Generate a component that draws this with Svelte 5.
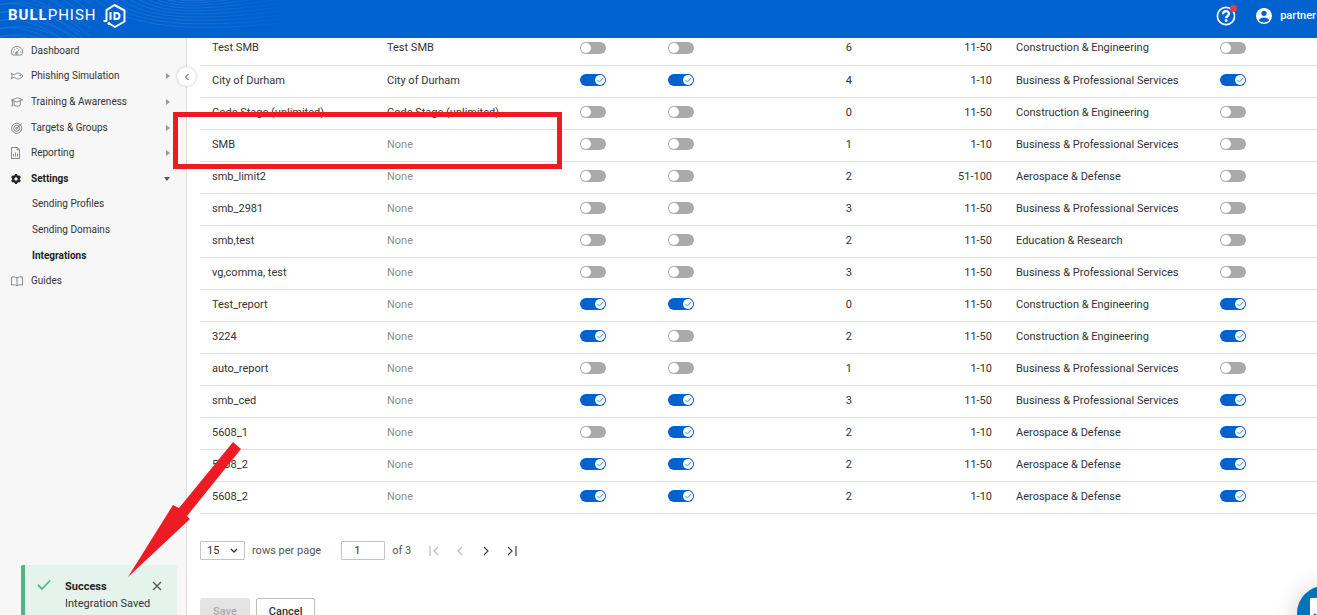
<script lang="ts">
  type Row = [string, string, number, number, number, string, string, number];
  const CE = 'Construction & Engineering';
  const BP = 'Business & Professional Services';
  const AD = 'Aerospace & Defense';
  const ER = 'Education & Research';
  const rows: Row[] = [
    ['Test SMB', 'Test SMB', 0, 0, 6, '11-50', CE, 0],
    ['City of Durham', 'City of Durham', 1, 1, 4, '1-10', BP, 1],
    ['Code Stage (unlimited)', 'Code Stage (unlimited)', 0, 0, 0, '11-50', CE, 0],
    ['SMB', '', 0, 0, 1, '1-10', BP, 0],
    ['smb_limit2', '', 0, 0, 2, '51-100', AD, 0],
    ['smb_2981', '', 0, 0, 3, '11-50', BP, 0],
    ['smb,test', '', 0, 0, 2, '11-50', ER, 0],
    ['vg,comma, test', '', 0, 0, 3, '11-50', BP, 0],
    ['Test_report', '', 1, 1, 0, '11-50', CE, 1],
    ['3224', '', 1, 0, 2, '11-50', CE, 1],
    ['auto_report', '', 0, 0, 1, '1-10', BP, 0],
    ['smb_ced', '', 1, 1, 3, '11-50', BP, 1],
    ['5608_1', '', 0, 1, 2, '1-10', AD, 1],
    ['5608_2', '', 1, 1, 2, '11-50', AD, 1],
    ['5608_2', '', 1, 1, 2, '1-10', AD, 1],
  ];
  const nav = [
    { label: 'Dashboard', icon: 'gauge', arrow: '' },
    { label: 'Phishing Simulation', icon: 'fish', arrow: 'right' },
    { label: 'Training & Awareness', icon: 'cap', arrow: 'right' },
    { label: 'Targets & Groups', icon: 'target', arrow: 'right' },
    { label: 'Reporting', icon: 'report', arrow: 'right' },
    { label: 'Settings', icon: 'gear', arrow: 'down' },
    { label: 'Sending Profiles', icon: '', arrow: '' },
    { label: 'Sending Domains', icon: '', arrow: '' },
    { label: 'Integrations', icon: '', arrow: '' },
    { label: 'Guides', icon: 'book', arrow: '' },
  ];
  const waves = Array.from({ length: 12 }, (_, i) => i * 8);
</script>

{#snippet toggle(on: number, label: string)}
  <input class="toggle" type="checkbox" role="switch" checked={!!on} aria-label={label} />
{/snippet}

<div class="page">
  <header>
    <svg class="waves" viewBox="0 0 290 38" aria-hidden="true">
      {#each waves as w}
        <path d="M-10 {w - 34}C30 {w - 44} 60 {w - 20} 90 {w + 4}" />
        <path d="M{90 + w} -6C{120 + w} {26 - w / 4} {180 + w / 2} {34 - w / 2} 290 {22 - w / 2}" />
        <path d="M-10 {w + 8}C20 {w - 4} 50 {w + 6} 80 {w + 24}" />
      {/each}
    </svg>
    <a class="brand" href="#home" aria-label="BullPhish ID">
      <span><b>BULL</b>PHISH</span>
      <svg width="24" height="26" viewBox="0 0 24 26" fill="none" stroke="#fff" stroke-width="2" aria-hidden="true">
        <path d="M1.500 18h3V7.200L12.500 2 22.500 7.500V18.500L13 24 7 20.500" stroke-linejoin="round" />
        <circle cx="7" cy="20.500" r="1.500" fill="#fff" stroke="none" />
        <path d="M8.500 9v8M12.500 10v6h2c4 0 4-6 0-6z" />
      </svg>
    </a>
    <div class="account">
      <button class="help" aria-label="Help">
        <svg width="20" height="20" viewBox="0 0 20 20" fill="none" stroke="#fff" aria-hidden="true">
          <circle cx="10" cy="10" r="8.600" stroke-width="1.700" />
          <path d="M7 8.200c0-4 6-4 6-.4 0 2.200-2.900 2.200-2.900 4.400" stroke-width="2.300" />
          <circle cx="10.100" cy="14.700" r="1.400" fill="#fff" stroke="none" />
        </svg>
        <i class="dot"></i>
      </button>
      <button class="user">
        <svg width="16" height="16" viewBox="0 0 16 16" aria-hidden="true">
          <circle cx="8" cy="8" r="8" fill="#fff" />
          <circle cx="8" cy="5.300" r="2.600" fill="#0062cf" />
          <path d="M2.800 12.200C4.200 8.700 11.800 8.700 13.200 12.200 10.500 15.200 5.500 15.200 2.800 12.200z" fill="#0062cf" />
        </svg>
        partner
      </button>
    </div>
  </header>

  <div class="body">
    <aside>
      <nav>
        {#each nav as n}
          <a href="#nav" class:sub={!n.icon} class:bold={n.label === 'Settings' || n.label === 'Integrations'}>
            {#if n.icon}
              <svg class="ico" viewBox="0 0 12 12" fill="none" stroke="#6a6d74" stroke-width="0.8" aria-hidden="true">
                {#if n.icon === 'gauge'}
                  <path d="M1.500 10C-.8 6.500 1 1.500 6 1.500S12.800 6.500 10.500 10zM5.200 8.500 8 4.500M2 7h1M3 4l.6.6M6 3v1M9 7h1" />
                  <circle cx="5.500" cy="8" r="1" />
                {:else if n.icon === 'fish'}
                  <path d="M.3 3.200 3.300 5C5.200 2.300 9.500 2.300 11.800 6 9.500 9.700 5.200 9.700 3.300 7L.3 8.800 1.200 6z" />
                  <circle cx="9.200" cy="5.400" r=".5" />
                {:else if n.icon === 'cap'}
                  <path d="M.3 4 6.300 1.800 11.700 3.800 6 6zM3 5.200v4c2 1.400 4.500 1.400 6.300 0V5M1.300 4.500v5M.5 9.800h1.600" />
                {:else if n.icon === 'target'}
                  <circle cx="5.700" cy="6.300" r="5" /><circle cx="5.700" cy="6.300" r="3" /><circle cx="5.700" cy="6.300" r="1" />
                  <path d="M5.700 6.300 11 1.500" />
                {:else if n.icon === 'report'}
                  <path d="M.5.5h5.800l2.200 2.200v8.800h-8zM6.200.5v2.300h2.300M2.500 9.500V7M4.500 9.500V5.500M6.500 9.500V6.500" />
                {:else if n.icon === 'gear'}
                  <circle cx="5" cy="6" r="2.800" stroke="#222" stroke-width="2.200" />
                  <path d="M5 1v2M5 9v2M.7 3.500l1.700 1M7.600 7.500l1.700 1M.7 8.500l1.700-1M7.600 4.500l1.700-1" stroke="#222" stroke-width="2.200" />
                {:else}
                  <path d="M6 3C4.500 1.700 2.500 1.700.5 2v8c2-.3 4-.3 5.500.7 1.500-1 3.500-1 5.500-.7V2C9.500 1.700 7.500 1.700 6 3zv7.500" />
                {/if}
              </svg>
            {/if}
            <span>{n.label}</span>
            {#if n.arrow}<i class={n.arrow}></i>{/if}
          </a>
        {/each}
      </nav>
      <button class="collapse" aria-label="Collapse menu">
        <svg width="6" height="8" viewBox="0 0 6 8" fill="none" stroke="#444"><path d="M4.500 1 1.500 4l3 3" /></svg>
      </button>
    </aside>

    <main>
      <table>
        <colgroup><col class="c1" /><col class="c2" /><col class="c3" /><col class="c3" /><col class="c5" /><col class="c6" /><col class="c7" /><col /></colgroup>
        <tbody>
          {#each rows as r}
            <tr>
              <td>{r[0]}</td>
              <td class:none={!r[1]}>{r[1] || 'None'}</td>
              <td>{@render toggle(r[2], 'Sync')}</td>
              <td>{@render toggle(r[3], 'Groups')}</td>
              <td class="num">{r[4]}</td>
              <td class="num">{r[5]}</td>
              <td>{r[6]}</td>
              <td>{@render toggle(r[7], 'Active')}</td>
            </tr>
          {/each}
        </tbody>
      </table>

      <div class="pager">
        <div class="select">
          <select id="size"><option>15</option></select>
          <svg width="8" height="6" viewBox="0 0 8 6" fill="none" stroke="#333" stroke-width="1.300"><path d="M1 1l3 3 3-3" /></svg>
        </div>
        <label for="size">rows per page</label>
        <input id="page" type="text" value="1" />
        <label for="page">of 3</label>
        <div class="steps">
          <button disabled aria-label="First page"><svg viewBox="0 0 10 12"><path d="M1 1v10M9 2 5 6l4 4" /></svg></button>
          <button disabled aria-label="Previous page"><svg viewBox="0 0 10 12"><path d="M7 2 3 6l4 4" /></svg></button>
          <button aria-label="Next page"><svg viewBox="0 0 10 12"><path d="M3 2l4 4-4 4" /></svg></button>
          <button aria-label="Last page"><svg viewBox="0 0 10 12"><path d="M9 1v10M1 2l4 4-4 4" /></svg></button>
        </div>
      </div>

      <div class="actions">
        <button disabled>Save</button>
        <button>Cancel</button>
      </div>
    </main>
  </div>

  <div class="toast" role="status">
    <svg width="14" height="12" viewBox="0 0 14 12" fill="none" stroke="#4fb783" stroke-width="1.800"><path d="M1 6l4 4 8-8.500" /></svg>
    <div><b>Success</b><span>Integration Saved</span></div>
    <button aria-label="Dismiss"><svg width="10" height="10" viewBox="0 0 10 10" stroke="#555" stroke-width="1.300"><path d="M1 1l8 8M9 1 1 9" /></svg></button>
  </div>

  <button class="chat" aria-label="Open chat">
    <svg width="28" height="30" viewBox="0 0 28 30"><path d="M1 0h26v26l-6-3H1q-1 0-1-1V1q0-1 1-1z" fill="#fff" /><path d="M4 16q10 8 20 0" fill="none" stroke="#0073b9" stroke-width="2" /></svg>
  </button>

  <div class="frame"></div>
  <svg class="pointer" viewBox="0 0 118 138" aria-hidden="true"><path d="M107 1 115 8 61 75 64 78 2 136 47 64 53 67z" fill="#ed1c24" /></svg>
</div>

<style>
  :global(body) { margin: 0; overflow: hidden; }
  .page { position: relative; height: 100vh; overflow: hidden; display: flex; flex-direction: column; font: 11px/16px Roboto, sans-serif; color: #333; background: #fff; }
  .page * { box-sizing: border-box; }
  button { border: 0; background: none; padding: 0; font: inherit; color: inherit; }
  a { color: inherit; text-decoration: none; }
  svg { display: block; flex: none; }
  header { position: relative; z-index: 2; flex: none; height: 38px; background: #0062cf; color: #fff; display: flex; align-items: center; justify-content: space-between; overflow: hidden; }
  .waves { position: absolute; left: 0; top: 0; width: 290px; height: 38px; fill: none; stroke: #1970d6; mask-image: linear-gradient(90deg, #000 70%, transparent); }
  .brand { position: relative; display: flex; align-items: center; gap: 5px; padding: 0 0 8px 8px; font-size: 15px; letter-spacing: 1px; }
  .brand svg { margin-top: 1px; }
  .account { display: flex; align-items: center; gap: 20px; padding: 0 1px 7px 0; }
  .help { position: relative; }
  .dot { position: absolute; right: -1px; top: -1px; width: 7px; height: 7px; border-radius: 50%; background: #d9444c; }
  .user { display: flex; align-items: center; gap: 8px; font-weight: 500; }

  .body { flex: 1; display: flex; min-height: 0; }
  aside { position: relative; flex: none; width: 187px; background: #f7f7f7; border-right: 1px solid #e0e0e0; font-size: 10px; }
  nav { display: grid; grid-auto-rows: 1fr; height: 256px; }
  nav a { display: flex; align-items: center; gap: 8px; min-height: 0; padding: 0 16px 0 11px; }
  nav a.sub { padding-left: 32px; }
  nav span { flex: 1; }
  .bold { font-weight: 700; color: #222; }
  .ico { width: 12px; height: 12px; }
  .right { border-left: 4px solid #999; border-block: 3px solid transparent; }
  .down { border-top: 4px solid #555; border-inline: 3px solid transparent; }
  .collapse { position: absolute; right: -10px; top: 29px; width: 19px; height: 19px; border-radius: 50%; background: #fff; box-shadow: 0 0 3px #bbb; display: grid; place-items: center; z-index: 1; }

  main { flex: 1; min-width: 0; padding-left: 13px; }
  table { width: 100%; margin-top: -5px; table-layout: fixed; border-collapse: separate; border-spacing: 0; }
  .c1 { width: 175px; } .c2 { width: 193px; } .c3 { width: 88px; } .c5 { width: 120px; } .c6 { width: 140px; } .c7 { width: 204px; }
  td { height: 32px; padding: 0 12px 2px; border-bottom: 1px solid #e0e0e0; white-space: nowrap; }
  tr:first-child td { height: 33px; }
  td:has(.toggle) { padding-bottom: 3px; }
  .none { color: #8c8c8c; }
  .num { text-align: right; }
  .toggle { appearance: none; display: block; width: 26px; height: 12px; margin: 0; border-radius: 6px; background: #aaa; }
  .toggle::before { content: ''; display: block; width: 10px; height: 10px; margin: 1px; float: left; border-radius: 50%; background: #fff; }
  .toggle:checked { background: #0062cf; }
  .toggle:checked::before { float: right; background: #fff url("data:image/svg+xml,%3Csvg xmlns='http://www.w3.org/2000/svg' viewBox='0 0 10 10'%3E%3Cpath d='M2.500 5l2 2 3.500-4' fill='none' stroke='%233f83d6'/%3E%3C/svg%3E"); }

  .pager { display: flex; align-items: center; margin-top: 27px; color: #555; gap: 7px; }
  .select { position: relative; }
  .select svg { position: absolute; right: 7px; top: 7px; pointer-events: none; }
  select, input[type='text'] { appearance: none; display: block; width: 44px; height: 19px; margin: 0; border: 1px solid #c4c4c4; border-radius: 1px; background: #fff; font: inherit; color: #333; }
  select { padding: 0 6px; width: 45px; }
  input[type='text'] { padding: 0 12px; margin-left: 13px; }
  .steps { display: flex; gap: 16px; margin-left: 11px; }
  .steps svg { width: 10px; height: 12px; fill: none; stroke: #444; stroke-width: 1.2; }
  .steps button:disabled svg { stroke: #bbb; }
  .actions { display: flex; gap: 6px; margin-top: 38px; }
  .actions button { height: 28px; padding: 0 12px; border: 1px solid #bdbdbd; border-radius: 2px; font-weight: 500; }
  .actions button:disabled { background: #e4e4e4; border-color: #e4e4e4; color: #aaa; }

  .toast { position: absolute; left: 21px; top: 565px; width: 156px; height: 60px; display: flex; gap: 14px; padding: 13px 15px 0 12px; border-left: 4px solid #4fb783; border-radius: 2px; background: #e4f4ec; line-height: 17px; }
  .toast > svg { margin-top: 1px; }
  .toast div { flex: 1; display: flex; flex-direction: column; white-space: nowrap; }
  .toast > button { position: absolute; right: 15px; top: 16px; }
  .toast b { color: #222; }
  .chat { position: absolute; right: -34px; bottom: -25px; width: 54px; height: 54px; border-radius: 50%; background: #0073b9; box-shadow: 0 2px 24px #0003; display: grid; place-items: center; }
  .frame { position: absolute; z-index: 3; left: 173px; top: 112px; width: 389px; height: 57px; border: 5px solid #ed1c24; }
  .pointer { position: absolute; z-index: 3; left: 126px; top: 441px; width: 118px; height: 138px; }
</style>
